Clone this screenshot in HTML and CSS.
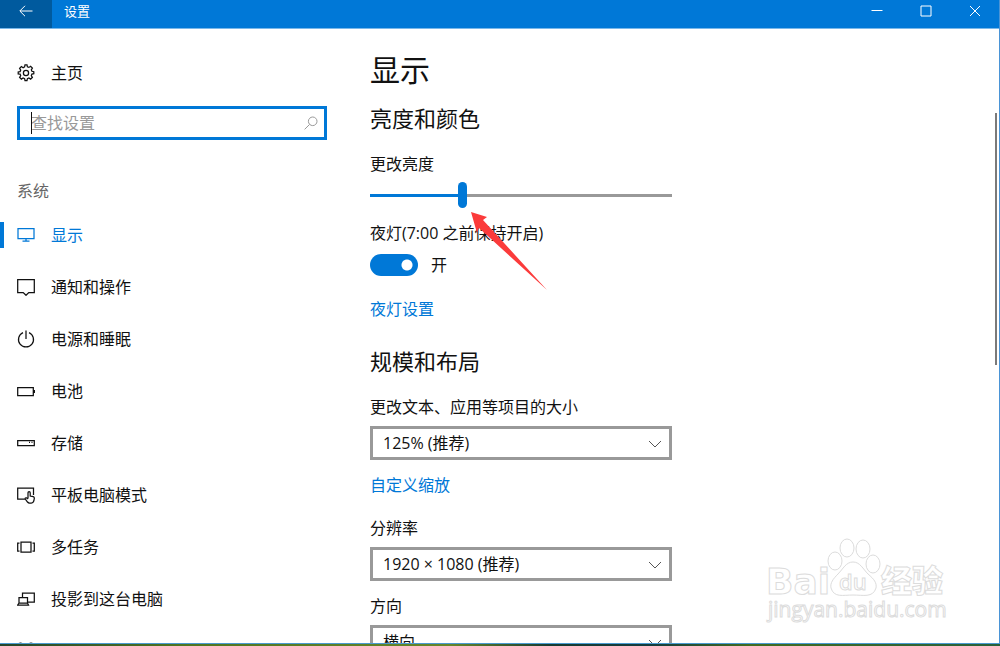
FILE: index.html
```html
<!DOCTYPE html>
<html lang="zh-CN">
<head>
<meta charset="utf-8">
<title>设置</title>
<link rel="stylesheet" href="styles.css">
</head>
<body>
<div class="window">
  <header class="titlebar">
    <button class="back" aria-label="返回"><svg width="14" height="12" viewBox="0 0 14 12"><path d="M13.5 6H1M6 .8L.8 6 6 11.200"/></svg></button>
    <span class="caption">设置</span>
    <div class="controls">
      <button aria-label="最小化"><svg width="12" height="12" viewBox="0 0 12 12"><path d="M.5 5.500h11"/></svg></button>
      <button aria-label="最大化"><svg width="12" height="12" viewBox="0 0 12 12"><path d="M1 1h10v10H1z"/></svg></button>
      <button aria-label="关闭"><svg width="12" height="12" viewBox="0 0 12 12"><path d="M1 1l10 10M11 1L1 11"/></svg></button>
    </div>
  </header>
  <div class="body">
    <nav class="sidebar">
      <a class="item home" href="#"><svg class="icon" viewBox="0 0 18 18"><circle cx="9" cy="9" r="2.600"/><path d="M7.6 2.800L8 .9h2l.4 1.900 1.500.6 1.700-1.100 1.800 1.800-1.100 1.700.6 1.500 1.900.4v2l-1.900.4-.6 1.500 1.100 1.700-1.800 1.800-1.700-1.100-1.500.6-.4 1.900H8l-.4-1.900-1.500-.6-1.700 1.100-1.800-1.800 1.100-1.700-.6-1.500L1.200 10V8l1.900-.4.6-1.500-1.100-1.700 1.800-1.800 1.700 1.100z"/></svg>主页</a>
      <div class="search">
        <input type="text" placeholder="查找设置" aria-label="查找设置">
        <span class="caret"></span>
        <svg class="glass" viewBox="0 0 14 14"><circle cx="8.700" cy="5.300" r="4.300"/><path d="M5.600 8.400L.6 13.400"/></svg>
      </div>
      <h2 class="group">系统</h2>
      <a class="item active" href="#"><svg class="icon" viewBox="0 0 18 18"><path d="M1 2.500h16v10H1zM9 12.500v2.500M5.500 15h7"/></svg>显示</a>
      <a class="item" href="#"><svg class="icon" viewBox="0 0 18 18"><path d="M.7 1.500h16.600v13h-5.500L9 17.300 6.200 14.500H.7z"/></svg>通知和操作</a>
      <a class="item" href="#"><svg class="icon" viewBox="0 0 18 18"><path d="M9 .5v8.500M6 2.600a7.500 7.500 0 1 0 6 0"/></svg>电源和睡眠</a>
      <a class="item" href="#"><svg class="icon" viewBox="0 0 18 18"><path d="M.7 5.500h15.600v8H.7zM17.500 8v3"/></svg>电池</a>
      <a class="item" href="#"><svg class="icon" viewBox="0 0 18 18"><path d="M.7 6.500h16.600v5H.7zM12 8.300h1M14.500 8.300h1"/></svg>存储</a>
      <a class="item" href="#"><svg class="icon" viewBox="0 0 18 18"><path d="M8 13H.7V2h15.800v7M11 12.500V6.800a1.100 1.100 0 0 1 2.200 0V10l3 .7q1.200.4 1.100 1.600l-.5 2.700q-.6 2-2.500 2h-1.800q-1.200 0-2-1l-2.200-3q-.4-1.400 1.200-1.200l1.500 1.200"/></svg>平板电脑模式</a>
      <a class="item" href="#"><svg class="icon" viewBox="0 0 18 18"><path d="M4 4h10v10H4zM2.500 5H.7v8h1.800M15.500 5h1.800v8h-1.800"/></svg>多任务</a>
      <a class="item" href="#"><svg class="icon" viewBox="0 0 18 18"><path d="M5.500 7V3h11.800v9H11M2 7.500h8.500v5.500H2zM.7 15h10.800l-1-2H2z"/></svg>投影到这台电脑</a>
      <a class="item" href="#"><svg class="icon" viewBox="0 0 18 18"><circle cx="3.500" cy="3" r="2"/><circle cx="14" cy="3" r="2"/><circle cx="3.500" cy="15" r="2"/><circle cx="14" cy="15" r="2"/><path d="M5 5l7.500 8.500M12.500 5L5 13.500"/></svg>共享的体验</a>
    </nav>
    <main class="content">
      <h1>显示</h1>
      <h2>亮度和颜色</h2>
      <label class="label" for="brightness">更改亮度</label>
      <input class="slider" id="brightness" type="range" min="0" max="100" value="30">
      <div class="label night" id="night-label">夜灯(7:00 之前保持开启)
        <svg class="arrow" viewBox="0 0 78 80"><path d="M1 1l16 5-4 3 64 70L9 17l-2 5z"/></svg>
      </div>
      <label class="toggle"><input type="checkbox" role="switch" aria-labelledby="night-label" checked>开</label>
      <a class="link" href="#">夜灯设置</a>
      <h2 class="layout">规模和布局</h2>
      <label class="label" for="scale">更改文本、应用等项目的大小</label>
      <div class="select"><select id="scale"><option>125% (推荐)</option></select><svg viewBox="0 0 14 8"><path d="M1 1l6 6 6-6"/></svg></div>
      <a class="link custom" href="#">自定义缩放</a>
      <label class="label" for="resolution">分辨率</label>
      <div class="select"><select id="resolution"><option>1920 × 1080 (推荐)</option></select><svg viewBox="0 0 14 8"><path d="M1 1l6 6 6-6"/></svg></div>
      <label class="label direction" for="orientation">方向</label>
      <div class="select"><select id="orientation"><option>横向</option></select><svg viewBox="0 0 14 8"><path d="M1 1l6 6 6-6"/></svg></div>
    </main>
  </div>
  <div class="scrollbar"></div>
  <svg class="watermark" viewBox="0 0 184 90" role="img" aria-label="Baidu 经验">
    <g class="mark">
      <text class="latin" x="1" y="58">Bai</text>
      <ellipse cx="70" cy="25" rx="7" ry="9"/>
      <ellipse cx="82" cy="12" rx="7" ry="9"/>
      <ellipse cx="98" cy="13" rx="7" ry="9"/>
      <ellipse cx="108" cy="28" rx="7" ry="9"/>
      <path d="M88 26c7 0 10 7 15 12 6 5 9 9 8 14-3 10-13 7-23 7s-19 3-22-7c-1-5 2-9 7-14 5-5 8-12 15-12z"/>
      <text class="du" x="74" y="54">du</text>
      <text class="cjk" x="116" y="56">经验</text>
      <text class="url" x="3" y="81">jingyan.baidu.com</text>
    </g>
  </svg>
</div>
<footer class="desktop"></footer>
</body>
</html>
```
FILE: styles.css
```css
* { box-sizing: border-box; }
body {
  margin: 0;
  height: 100vh;
  display: flex;
  flex-direction: column;
  overflow: hidden;
  font: 16px/24px "Open Sans", "Noto Sans CJK SC", sans-serif;
  color: #111;
  background: #fff;
}
button, input, select { font: inherit; color: inherit; }
a { color: #0078d7; text-decoration: none; }
svg { fill: none; stroke: currentColor; }
h1, h2 { margin: 0; font-weight: 400; }

.window {
  position: relative;
  flex: 1;
  min-height: 0;
  display: flex;
  flex-direction: column;
  overflow: hidden;
  border-right: 1px solid #4a94d6;
  border-bottom: 1px solid #4a9bd0;
}
.desktop { height: 2px; background: linear-gradient(90deg, #24452b, #4e7420 18%, #66862a 45%, #173a30 55%, #143b3d 65%, #416b20 75%, #28603a); }

.titlebar {
  flex: none;
  display: flex;
  height: 29px;
  color: #fff;
  background: #0078d7;
  border-bottom: 1px solid #7ab8ea;
}
.titlebar button { border: 0; padding: 0 0 6px; background: none; color: #fff; display: flex; align-items: center; justify-content: center; }
.titlebar .back { width: 52px; background: #005a9e; }
.caption { padding-left: 12px; font-size: 13px; line-height: 23px; }
.controls { margin-left: auto; display: flex; }
.controls button { width: 49px; }

.body { flex: 1; min-height: 0; display: flex; }
.sidebar { flex: none; width: 344px; padding-top: 18px; display: flex; flex-direction: column; }
.item { flex: none; display: flex; align-items: center; gap: 16px; height: 52px; padding-left: 17px; color: #111; }
.icon { width: 18px; height: 18px; stroke-width: 1.25; }
.active { color: #0078d7; background: linear-gradient(#0078d7, #0078d7) left center / 4px 26px no-repeat; }
.search { position: relative; margin: 7px 17px 39px; height: 34px; }
.search input { display: block; width: 100%; height: 34px; padding: 0 40px 0 11px; border: 3px solid #0078d7; outline: 0; background: #fff; }
.search input::placeholder { color: #999; opacity: 1; }
.caret { position: absolute; left: 14px; top: 6px; width: 1px; height: 22px; background: #111; }
.glass { position: absolute; right: 9px; top: 10px; width: 14px; height: 14px; color: #999; }
.group { margin: 0 0 6px 17px; font-size: 16px; line-height: 24px; color: #666; }

.content { flex: 1; padding: 20px 24px 0 26px; display: flex; flex-direction: column; align-items: flex-start; }
.content > * { flex: none; }
h1 { font-size: 30px; line-height: 42px; }
.content h2 { font-size: 22px; line-height: 32px; margin-top: 11px; }
.label { margin-top: 18px; }
.slider { appearance: none; width: 302px; height: 26px; margin: 6px 0 0; background: linear-gradient(90deg, #0078d7 30%, #999 30%) center / 100% 3px no-repeat; }
.slider::-webkit-slider-thumb { appearance: none; width: 9px; height: 26px; border-radius: 5px; background: #0078d7; }
.content .night { position: relative; margin-top: 13px; }
.arrow { position: absolute; left: 100px; top: -10px; width: 78px; height: 80px; fill: #fb3b3b; stroke: none; }
.toggle { display: flex; align-items: center; gap: 13px; margin-top: 8px; }
.toggle input { appearance: none; margin: 0; width: 48px; height: 22px; border-radius: 11px; background: radial-gradient(circle at 37px 11px, #fff 5px, #0078d7 6px); }
.link { margin-top: 20px; }
.content .layout { margin-top: 24px; }
.select { position: relative; margin-top: 7px; width: 302px; }
.select select { display: block; appearance: none; width: 100%; height: 34px; padding: 0 36px 0 10px; border: 3px solid #999; border-radius: 0; background: #fff; }
.select svg { position: absolute; right: 10px; top: 14px; width: 14px; height: 8px; color: #555; pointer-events: none; }
.content .custom { margin-top: 13px; }
.custom + .label { margin-top: 19px; }
.content .direction { margin-top: 13px; }

.scrollbar { position: absolute; right: 2px; top: 113px; width: 2px; height: 252px; background: #7a7a7a; }
.watermark { position: absolute; right: 50px; bottom: 17px; width: 184px; height: 90px; }
.mark { fill: #fff; stroke: #dcdcdc; stroke-width: 1; }
.latin { font: 700 36px "DejaVu Sans", sans-serif; }
.du { font: 600 22px "Open Sans", sans-serif; }
.cjk { font: 900 31px "Noto Sans CJK SC", sans-serif; }
.url { font: 21px "Open Sans", sans-serif; }
```
